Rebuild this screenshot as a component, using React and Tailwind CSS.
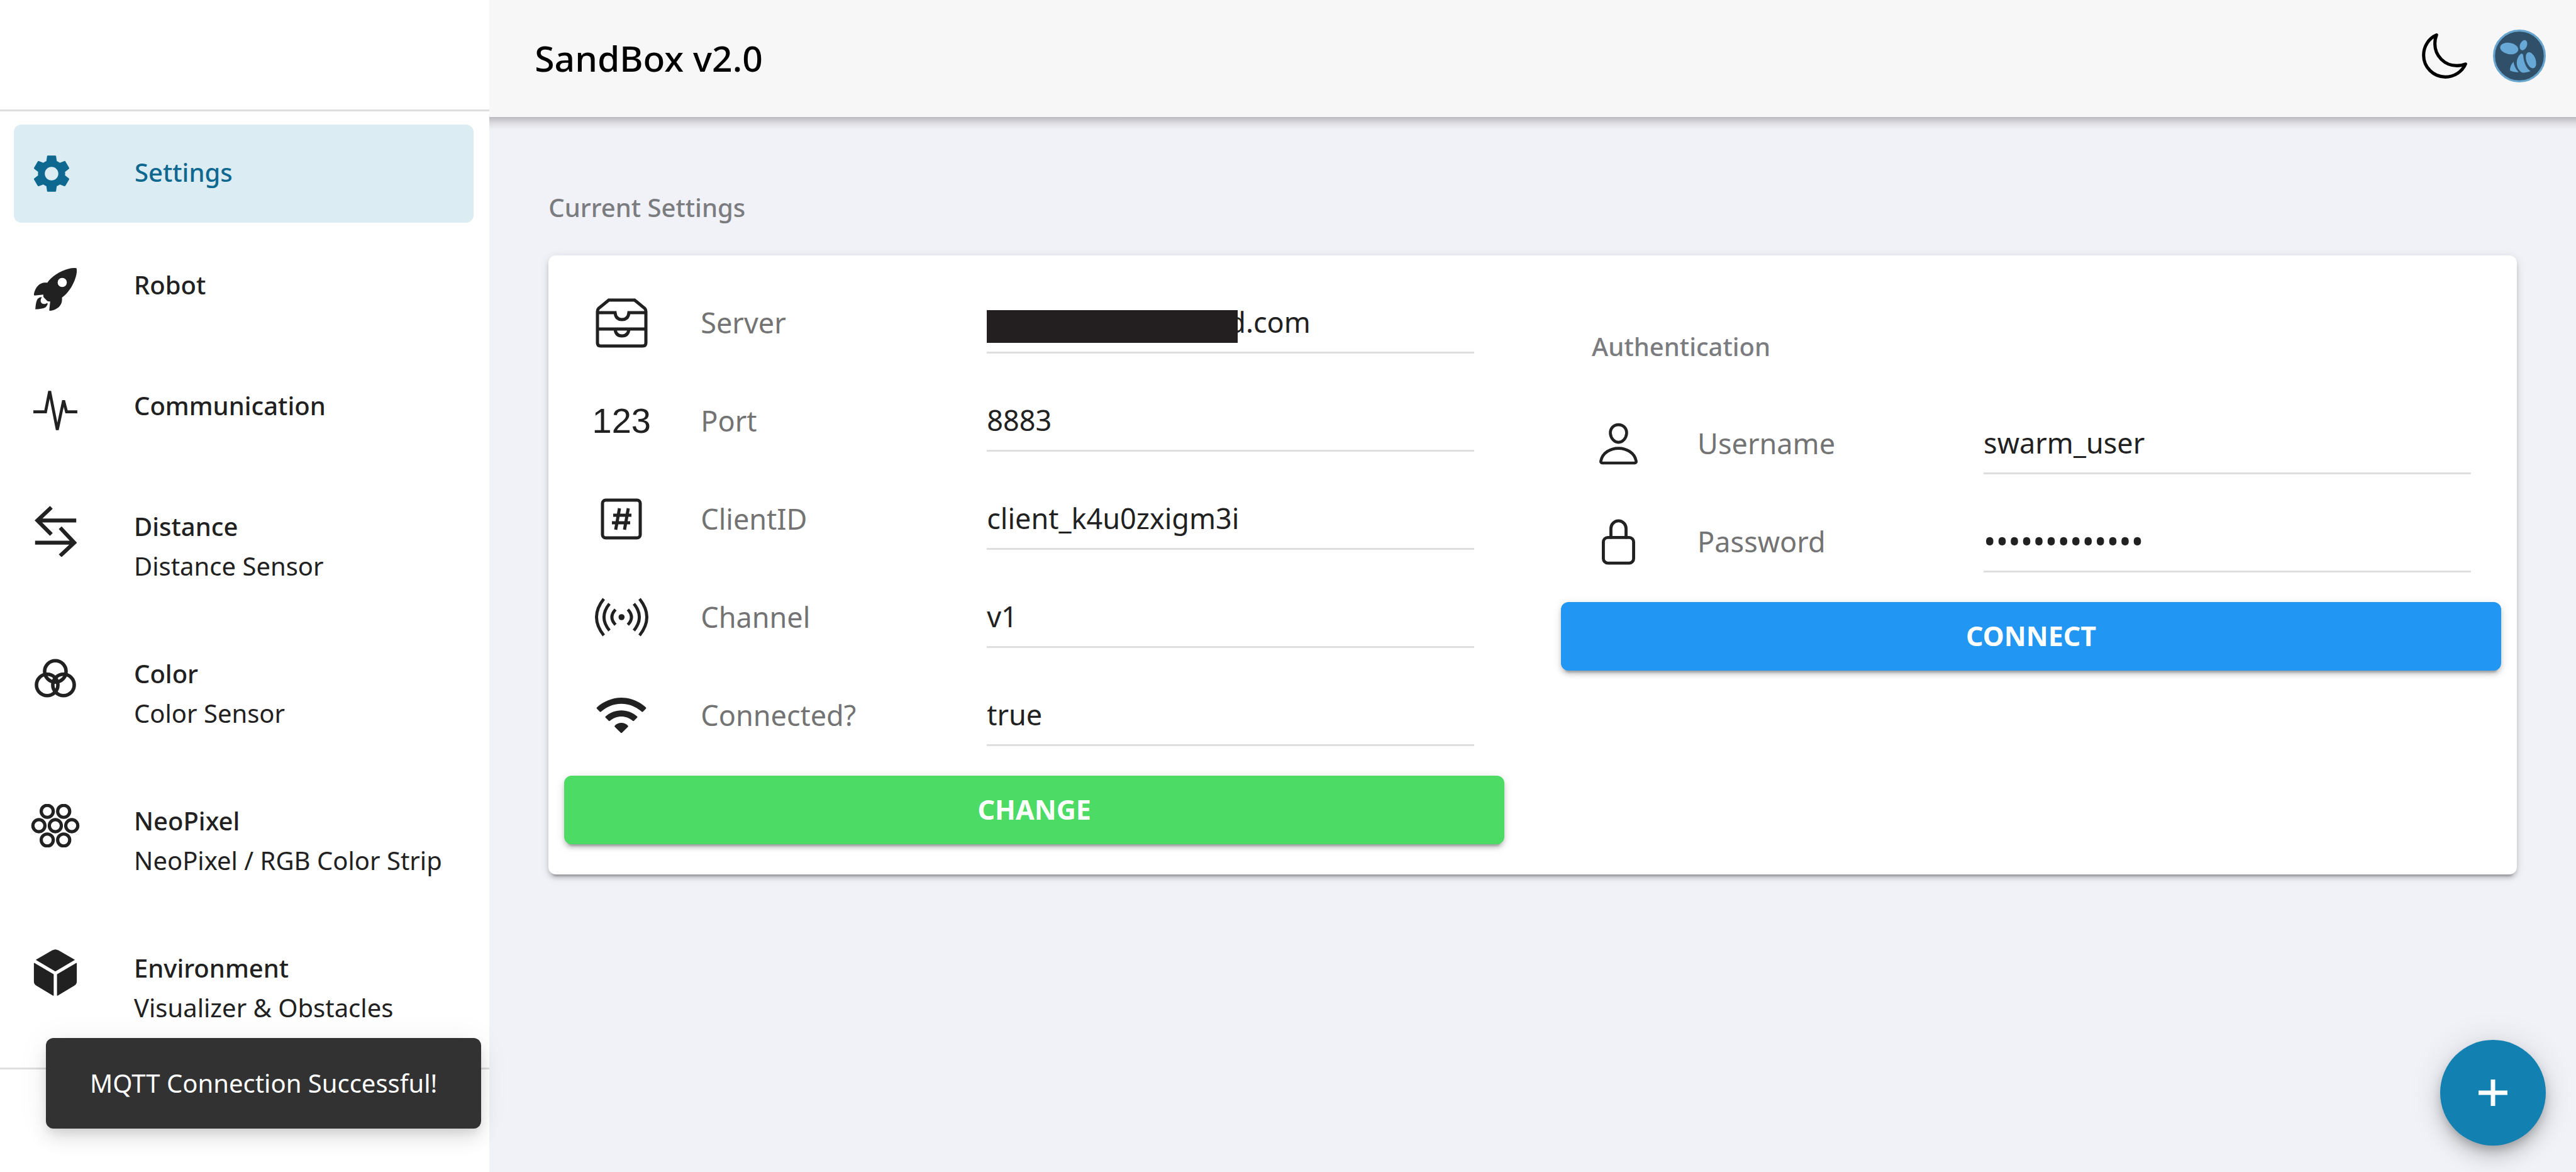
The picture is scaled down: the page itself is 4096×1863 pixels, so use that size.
import { IoPersonOutline, IoLockClosedOutline, IoMoonOutline, IoCube, IoRocketSharp } from 'react-icons/io5';
import { IoIosWifi } from 'react-icons/io';
import { MdSettings } from 'react-icons/md';

function PulseIcon() {
  return (
    <svg viewBox="0 0 224 234" className="h-[73px] w-[70px]" fill="none" stroke="currentColor" strokeWidth="15" strokeMiterlimit="4" aria-hidden="true">
      <path d="M0 124H62L83 18L122 216L154 66L169 124H224" />
    </svg>
  );
}

function SwapIcon() {
  return (
    <svg viewBox="0 0 214 260" className="h-[81px] w-[67px]" fill="none" stroke="currentColor" strokeWidth="20" aria-hidden="true">
      <path d="M212 75H12M85 8L14 75L85 146M2 188H202M130 112L202 188L130 255" />
    </svg>
  );
}

function ColorIcon() {
  return (
    <svg viewBox="0 0 178 166" className="h-[62px] w-[66px]" fill="none" stroke="currentColor" strokeWidth="15" aria-hidden="true">
      <circle cx="89" cy="54" r="46" />
      <circle cx="54" cy="112" r="46" />
      <circle cx="124" cy="112" r="46" />
    </svg>
  );
}

const pixels = [[71, 31], [142, 31], [35, 93], [106, 93], [177, 93], [71, 155], [142, 155]];

function PixelsIcon() {
  return (
    <svg viewBox="0 0 212 186" className="h-[69px] w-[78px]" fill="none" stroke="currentColor" strokeWidth="14" aria-hidden="true">
      {pixels.map(([x, y]) => <circle key={x + '-' + y} cx={x} cy={y} r="26" />)}
    </svg>
  );
}

function TrayIcon() {
  return (
    <svg viewBox="0 0 83 80" className="h-20 w-[83px]" fill="none" stroke="currentColor" strokeWidth="5" aria-hidden="true">
      <path d="M21 4H62L78 17Q80 19 80 22V72Q80 77 75 77H8Q3 77 3 72V22Q3 19 5 17Z" />
      <path d="M3 24H31Q32 35 42 35Q52 35 53 24H80M3 50H80M31 50Q32 61 42 61Q52 61 53 50" />
    </svg>
  );
}

function HashIcon() {
  return (
    <svg viewBox="0 0 66 66" className="h-[66px] w-[66px]" fill="none" stroke="currentColor" strokeWidth="5" aria-hidden="true">
      <rect x="3" y="3" width="60" height="60" rx="5" />
      <path d="M30 16L24 50M44 16L38 50M20 27H49M18 39H47" />
    </svg>
  );
}

function ChannelIcon() {
  return (
    <svg viewBox="0 0 277 192" className="h-[62px] w-[89px]" fill="none" stroke="currentColor" strokeWidth="15" aria-hidden="true">
      <path d="M50 6Q-22 96 50 186M78 30Q24 96 78 162M108 58Q72 96 108 134" />
      <path d="M227 6Q299 96 227 186M199 30Q253 96 199 162M169 58Q205 96 169 134" />
      <circle cx="138" cy="96" r="15" fill="currentColor" stroke="none" />
    </svg>
  );
}

function Logo() {
  return (
    <svg viewBox="0 0 260 260" className="h-[84px] w-[84px]" aria-hidden="true">
      <circle cx="130" cy="130" r="125" fill="#2f5068" stroke="#67a5cf" strokeWidth="10" />
      <g fill="#67a8d6">
        <ellipse cx="80" cy="93" rx="45" ry="28" transform="rotate(10 80 93)" />
        <ellipse cx="150" cy="77" rx="17" ry="26" transform="rotate(22 150 77)" />
        <path d="M140 118 C110 138 108 190 142 211 Q165 214 185 204 C160 190 150 150 148 122 Z" />
        <ellipse cx="187" cy="151" rx="23" ry="41" transform="rotate(-20 187 151)" />
        <path d="M101 158 Q82 180 84 202 Q104 212 126 209 Q104 186 101 158 Z" />
      </g>
    </svg>
  );
}

const items = [
  { label: 'Robot', icon: <IoRocketSharp size={78} /> },
  { label: 'Communication', icon: <PulseIcon /> },
  { label: 'Distance', sub: 'Distance Sensor', icon: <SwapIcon /> },
  { label: 'Color', sub: 'Color Sensor', icon: <ColorIcon /> },
  { label: 'NeoPixel', sub: 'NeoPixel / RGB Color Strip', icon: <PixelsIcon /> },
  { label: 'Environment', sub: 'Visualizer & Obstacles', icon: <IoCube size={88} /> },
];

function IconCell({ children }) {
  return <span className="flex h-[84px] w-[84px] shrink-0 items-center justify-center">{children}</span>;
}

function Field({ id, icon, label, value, type = 'text', redacted = false }) {
  return (
    <div className="flex h-[156px] items-center pl-[43px] pr-12">
      <span className="flex h-24 w-24 shrink-0 items-center justify-center">{icon}</span>
      <label htmlFor={id} className="ml-[78px] w-[455px] shrink-0 text-[45px] leading-[60px] text-[#737373]">
        {label}
      </label>
      <div className="relative min-w-0 flex-1">
        <input
          id={id}
          type={type}
          defaultValue={value}
          className={`block h-[98px] w-full border-b-[3px] border-[#dedede] bg-transparent text-[#212121] outline-none ${type === 'password' ? 'text-[52px]' : 'text-[45px]'} ${redacted ? 'pl-[384px]' : ''}`}
        />
        {redacted && <span className="absolute left-0 top-[29px] h-[52px] w-[399px] bg-[#231f20]" />}
      </div>
    </div>
  );
}

function WideButton({ color, children }) {
  return (
    <button
      type="button"
      className={`mt-[18px] h-[109px] w-full rounded-xl text-[43px] font-bold text-white shadow-[0_9px_3px_-6px_#0003,0_6px_6px_0_#00000024,0_3px_15px_0_#0000001f] ${color}`}
    >
      {children}
    </button>
  );
}

export default function App() {
  return (
    <div className="relative flex min-h-screen bg-[#f1f2f7] font-['Noto_Sans',sans-serif] text-[#212121]">
      <aside className="w-[19%] shrink-0 bg-white">
        <div className="h-[177px] border-b-[3px] border-[#dedede]" />
        <nav className="pt-[21px]">
          <a
            href="#settings"
            className="ml-[22px] mr-[25px] flex h-[156px] items-center gap-[90px] rounded-xl bg-[#dbecf2] pl-[18px] text-[40px] font-medium text-[#0f6890]"
          >
            <IconCell><MdSettings size={72} /></IconCell>
            <span className="pb-1">Settings</span>
          </a>
          <ul className="mt-16 flex flex-col gap-[105px] border-b-[3px] border-[#dedede] pb-16">
            {items.map((it) => (
              <li key={it.label}>
                <a href={'#' + it.label.toLowerCase()} className="flex min-h-[87px] gap-[83px] pl-[46px] text-[40px] leading-[63px]">
                  <IconCell>{it.icon}</IconCell>
                  <span className="pt-[3px]">
                    <span className="block font-medium">{it.label}</span>
                    {it.sub && <span className="block whitespace-nowrap">{it.sub}</span>}
                  </span>
                </a>
              </li>
            ))}
          </ul>
        </nav>
      </aside>

      <div className="flex-1">
        <header className="flex h-[186px] items-center bg-[#f7f7f7] pl-[72px] pr-12 text-black">
          <h1 className="flex-1 text-[57px] font-medium">SandBox v2.0</h1>
          <div className="flex gap-9 pb-2">
            <button type="button" aria-label="Toggle dark mode"><IoMoonOutline size={82} /></button>
            <button type="button" aria-label="Account"><Logo /></button>
          </div>
        </header>
        <div className="h-5 bg-linear-to-b from-[#b9b9be] via-[#dddde2] to-[#f1f2f7]" />

        <main className="pl-[94px] pr-[94px] pt-[94px]">
          <h2 className="pb-[46px] text-[40px] font-medium leading-[60px] text-[#7b7c7f]">Current Settings</h2>
          <section className="grid grid-cols-2 gap-[90px] rounded-xl bg-white px-[25px] pb-12 pt-[29px] shadow-[0_9px_3px_-6px_#0003,0_6px_6px_0_#00000024,0_3px_15px_0_#0000001f]">
            <form>
              <Field id="server" label="Server" value="d.com" redacted icon={<TrayIcon />} />
              <Field
                id="port"
                label="Port"
                value="8883"
                icon={<span aria-hidden="true" className="font-['Liberation_Sans',sans-serif] text-[56px] leading-none">123</span>}
              />
              <Field id="client" label="ClientID" value="client_k4u0zxigm3i" icon={<HashIcon />} />
              <Field id="channel" label="Channel" value="v1" icon={<ChannelIcon />} />
              <Field id="connected" label="Connected?" value="true" icon={<IoIosWifi size={90} />} />
              <WideButton color="bg-[#4cdb64]">CHANGE</WideButton>
            </form>
            <form>
              <h3 className="flex h-48 items-end pb-[46px] pl-[49px] text-[40px] font-medium leading-[60px] text-[#7b7c7f]">
                Authentication
              </h3>
              <Field id="username" label="Username" value="swarm_user" icon={<IoPersonOutline size={75} />} />
              <Field id="password" label="Password" type="password" value="abcdefghijklm" icon={<IoLockClosedOutline size={77} />} />
              <WideButton color="bg-[#2196f3]">CONNECT</WideButton>
            </form>
          </section>
        </main>
      </div>

      <div
        role="status"
        className="absolute bottom-[69px] left-[73px] flex h-36 items-center rounded-xl bg-[#323232] px-[70px] text-[40px] text-white shadow-[0_9px_15px_-3px_#0000001a,0_18px_30px_0_#00000014,0_3px_54px_0_#0000000f]"
      >
        MQTT Connection Successful!
      </div>
      <button
        type="button"
        aria-label="Add"
        className="absolute bottom-[42px] right-12 flex h-[168px] w-[168px] items-center justify-center rounded-full bg-[#1380b2] text-white shadow-[0_9px_15px_-3px_#0003,0_18px_30px_0_#00000024,0_3px_54px_0_#0000001f]"
      >
        <svg viewBox="0 0 48 48" className="h-12 w-12" stroke="currentColor" strokeWidth="7" aria-hidden="true">
          <path d="M24 3v42M1 24h46" />
        </svg>
      </button>
    </div>
  );
}
